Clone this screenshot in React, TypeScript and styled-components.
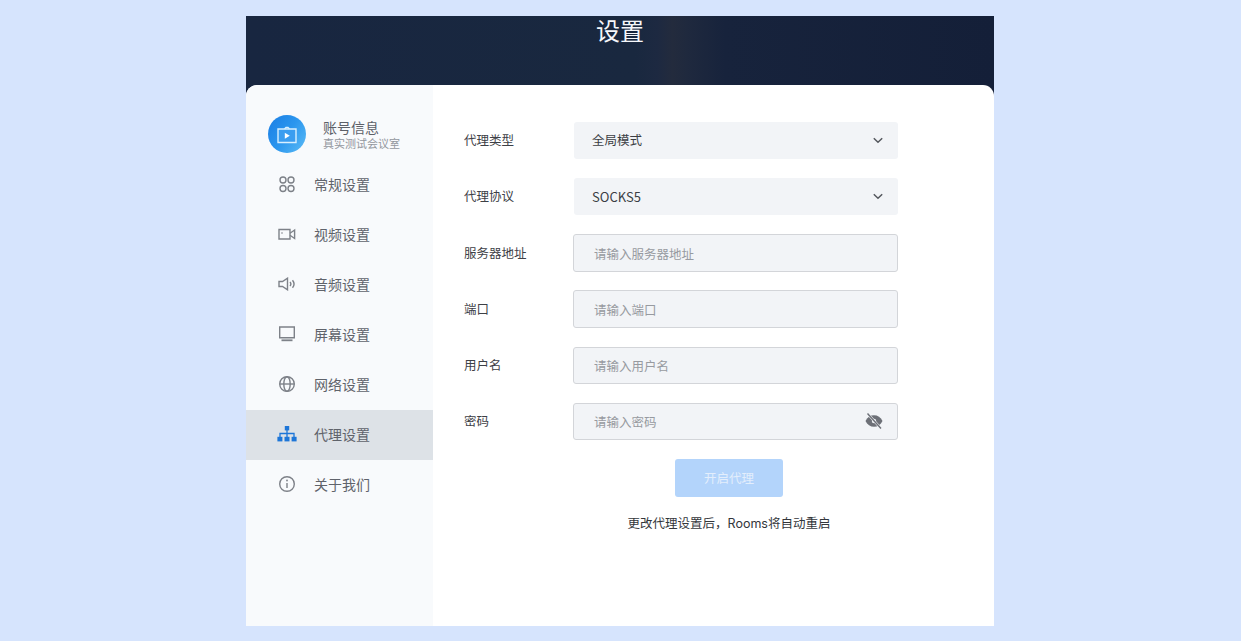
import React from "react";
import styled, { createGlobalStyle } from "styled-components";

const Global = createGlobalStyle`
  html, body { margin: 0; padding: 0; height: 100%; overflow: hidden; background: #d6e4fd; }
  body { font-family: "Noto Sans CJK SC", "Noto Sans", sans-serif; }
  * { box-sizing: border-box; }
`;

const Page = styled.div`
  width: 1241px;
  height: 641px;
  padding: 16px 0 15px 246px;
  background: #d6e4fd;
`;
const Win = styled.div`
  width: 748px;
  height: 610px;
  display: flex;
  flex-direction: column;
  background: linear-gradient(90deg, #182640 0%, #19283f 52%, #1d2941 55%, #232b3d 57%, #1f293e 59%, #17233c 64%, #141f38 100%);
`;
const Header = styled.header`
  height: 69px;
  flex: none;
  display: flex;
  justify-content: center;
  color: #f5f7fa;
  font-size: 24px;
  line-height: 27px;
  font-weight: 400;
`;
const Body = styled.div`
  flex: 1;
  display: flex;
  min-height: 0;
  border-radius: 11px 11px 0 0;
  overflow: hidden;
  background: #fff;
`;
const Side = styled.aside`
  width: 187px;
  flex: none;
  background: #f8fafc;
  padding-top: 30px;
`;
const Account = styled.div`
  height: 45px;
  display: flex;
  align-items: flex-start;
  padding-left: 22px;
  gap: 17px;
`;
const Avatar = styled.div`
  width: 38px;
  height: 38px;
  border-radius: 50%;
  flex: none;
  display: flex;
  align-items: center;
  justify-content: center;
  background: linear-gradient(125deg, #1a7de4 0%, #2b96ee 50%, #5cbcf6 100%);
`;
const AccountText = styled.div`
  display: flex;
  flex-direction: column;
  padding-top: 3px;
`;
const AccountName = styled.div`
  font-size: 14px;
  line-height: 18px;
  color: #5c6068;
`;
const AccountSub = styled.div`
  font-size: 11px;
  line-height: 14px;
  color: #93979e;
`;
const Item = styled.div<{ $active?: boolean }>`
  height: 50px;
  display: flex;
  align-items: center;
  padding: 0 0 3px 31px;
  gap: 17px;
  font-size: 14px;
  color: #5f636b;
  background: ${(p) => (p.$active ? "#dde2e7" : "transparent")};
`;
const IconBox = styled.span`
  width: 20px;
  height: 20px;
  display: flex;
  flex: none;
  align-items: center;
  justify-content: center;
`;
const Main = styled.main`
  flex: 1;
  padding: 37px 0 0 31px;
`;
const Row = styled.div`
  display: grid;
  grid-template-columns: 109px 325px;
  align-items: center;
  height: 37px;
  margin-bottom: 19.15px;
`;
const Label = styled.label`
  font-size: 12.5px;
  color: #3d4046;
  position: relative;
  top: -1px;
`;
const Select = styled.div`
  height: 37px;
  margin-left: 1px;
  border-radius: 3px;
  background: #f2f4f7;
  display: flex;
  align-items: center;
  justify-content: space-between;
  padding: 0 15px 0 18px;
  color: #3b3e44;
`;
const SelectValue = styled.span<{ $latin?: boolean }>`
  font-size: ${(p) => (p.$latin ? "13px" : "12.5px")};
  padding-bottom: ${(p) => (p.$latin ? "0" : "2px")};
`;
const Field = styled.div`
  height: 37.5px;
  border: 1px solid #d3d5d9;
  border-radius: 3px;
  background: #f2f4f7;
  display: flex;
  align-items: center;
  padding: 0 14px 0 20px;
`;
const Input = styled.input`
  flex: 1;
  min-width: 0;
  border: 0;
  outline: 0;
  background: transparent;
  font: 400 12.5px "Noto Sans CJK SC", sans-serif;
  padding: 0;
  color: #3b3e44;
  &::placeholder { color: #979aa0; opacity: 1; }
`;
const Actions = styled.div`
  width: 434px;
  display: flex;
  flex-direction: column;
  align-items: center;
`;
const Button = styled.button`
  width: 108px;
  height: 38px;
  margin-left: 96px;
  border: 0;
  border-radius: 3px;
  background: #b3d4fb;
  color: #e3eefc;
  font: 400 12.5px "Noto Sans CJK SC", sans-serif;
`;
const Note = styled.p`
  margin: 18px 0 0 96px;
  font-family: "Inter", "Noto Sans CJK SC", sans-serif;
  font-size: 12.5px;
  line-height: 18px;
  color: #33363b;
  white-space: nowrap;
`;

const S = { fill: "none", stroke: "#7d8188", strokeWidth: 1.4 };

const Chevron = () => (
  <svg width="10" height="7" viewBox="0 0 10 7"><path d="M.8 1.200 5 5.300l4.200-4.100" fill="none" stroke="#55585e" strokeWidth="1.500" /></svg>
);

const icons: Record<string, React.ReactNode> = {
  grid: (
    <svg width="18" height="18" viewBox="0 0 18 18" {...S}>
      <circle cx="5" cy="5" r="3" /><circle cx="13" cy="5" r="3" />
      <circle cx="5" cy="13.500" r="3" /><circle cx="13" cy="13.500" r="3" />
    </svg>
  ),
  video: (
    <svg width="18" height="14" viewBox="0 0 18 14" {...S}>
      <path d="M1 2.500h11v9.500H1z" />
      <path d="M12 6.200 16.600 3v8.500L12 8.300" />
      <circle cx="4" cy="6" r="0.800" fill="#7d8188" stroke="none" />
    </svg>
  ),
  sound: (
    <svg width="18" height="14" viewBox="0 0 18 14" {...S}>
      <path d="M1 4.500h3.500L9.500 1.200v11.600L4.500 9.500H1z" />
      <path d="M12 5a3 3 0 0 1 0 4M14.500 3.200a6 6 0 0 1 0 7.600" />
    </svg>
  ),
  screen: (
    <svg width="18" height="16" viewBox="0 0 18 16" {...S}>
      <path d="M1.700 1h14.600v10.800H1.700z" />
      <path d="M3.500 14.300h11" strokeWidth="1.800" />
    </svg>
  ),
  globe: (
    <svg width="18" height="18" viewBox="0 0 18 18" {...S}>
      <circle cx="9" cy="9" r="7.300" />
      <ellipse cx="9" cy="9" rx="3.200" ry="7.300" />
      <path d="M1.700 9h14.600" />
    </svg>
  ),
  net: (
    <svg width="20" height="18" viewBox="0 0 20 18">
      <g fill="#1d76d8">
        <rect x="7.800" y="1" width="4.400" height="4.400" />
        <rect x="0.400" y="11.800" width="5" height="4.600" />
        <rect x="7.500" y="11.800" width="5" height="4.600" />
        <rect x="14.600" y="11.800" width="5" height="4.600" />
      </g>
      <path d="M10 5v7M3 12V8.500h14V12" fill="none" stroke="#1d76d8" strokeWidth="1.300" />
    </svg>
  ),
  info: (
    <svg width="18" height="18" viewBox="0 0 18 18" {...S}>
      <circle cx="9" cy="9" r="7.300" />
      <path d="M9 8v5" />
      <circle cx="9" cy="5.500" r="0.900" fill="#7d8188" stroke="none" />
    </svg>
  ),
};

const menu = [
  ["grid", "常规设置"],
  ["video", "视频设置"],
  ["sound", "音频设置"],
  ["screen", "屏幕设置"],
  ["globe", "网络设置"],
  ["net", "代理设置"],
  ["info", "关于我们"],
];

const fields = [
  ["服务器地址", "请输入服务器地址"],
  ["端口", "请输入端口"],
  ["用户名", "请输入用户名"],
];

export default function App() {
  return (
    <Page>
      <Global />
      <Win>
        <Header>设置</Header>
        <Body>
          <Side>
            <Account>
              <Avatar>
                <svg width="22" height="20" viewBox="0 0 22 20" fill="none" stroke="#d8efff" strokeWidth="1.400">
                  <path d="M2 5h18v13.500H2z" fill="#3a9df0" />
                  <path d="M8.500 5 10 3.500h2L13.500 5" />
                  <path d="M8.800 8.800v6l5-3z" fill="#fff" stroke="none" />
                </svg>
              </Avatar>
              <AccountText>
                <AccountName>账号信息</AccountName>
                <AccountSub>真实测试会议室</AccountSub>
              </AccountText>
            </Account>
            {menu.map(([icon, name]) => (
              <Item key={name} $active={name === "代理设置"}>
                <IconBox>{icons[icon]}</IconBox>
                {name}
              </Item>
            ))}
          </Side>
          <Main>
            <Row>
              <Label>代理类型</Label>
              <Select><SelectValue>全局模式</SelectValue><Chevron /></Select>
            </Row>
            <Row>
              <Label>代理协议</Label>
              <Select><SelectValue $latin>SOCKS5</SelectValue><Chevron /></Select>
            </Row>
            {fields.map(([label, ph]) => (
              <Row key={label}>
                <Label>{label}</Label>
                <Field><Input placeholder={ph} /></Field>
              </Row>
            ))}
            <Row>
              <Label>密码</Label>
              <Field>
                <Input placeholder="请输入密码" />
                <svg width="18" height="18" viewBox="0 0 18 18">
                  <path d="M0.500 9C2.300 5.200 5.300 3.200 9 3.200s6.700 2 8.500 5.800c-1.800 3.800-4.800 5.800-8.500 5.800S2.300 12.800.5 9z" fill="#6d7077" />
                  <circle cx="9" cy="9" r="2.200" fill="#f2f4f7" />
                  <path d="M2.500 1.500 16 16.500" stroke="#f2f4f7" strokeWidth="2.600" />
                  <path d="M2.500 1.500 16 16.500" stroke="#6d7077" strokeWidth="1.400" />
                </svg>
              </Field>
            </Row>
            <Actions>
              <Button disabled>开启代理</Button>
              <Note>更改代理设置后，Rooms将自动重启</Note>
            </Actions>
          </Main>
        </Body>
      </Win>
    </Page>
  );
}
